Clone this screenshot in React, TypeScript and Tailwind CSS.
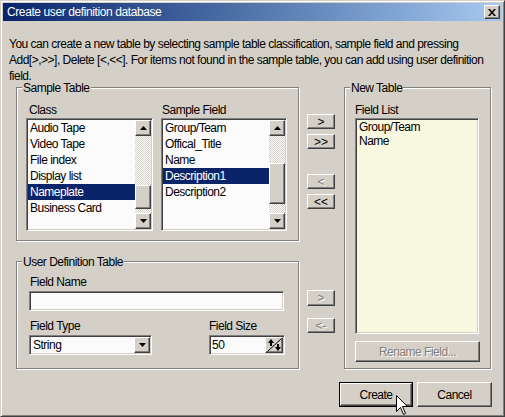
import React from 'react'

const raised =
  'bg-[#d4d0c8] border border-t-white border-l-white border-b-[#404040] border-r-[#404040] shadow-[inset_-1px_-1px_0_#808080]'
const sunken =
  'border border-t-[#808080] border-l-[#808080] border-b-white border-r-white shadow-[inset_1px_1px_0_#404040,inset_-1px_-1px_0_#d4d0c8] p-px'
const disabledText = 'text-[#808080] [text-shadow:1px_1px_0_#ffffff]'

function Group({ title, className, children }: { title: string; className: string; children: React.ReactNode }) {
  return (
    <div className={`relative border border-[#808080] shadow-[inset_1px_1px_0_#fff,1px_1px_0_#fff] ${className}`}>
      <span className="absolute left-[5px] top-[-8px] bg-[#d4d0c8] px-px leading-[16px]">{title}</span>
      {children}
    </div>
  )
}

function Arrow({ down }: { down?: boolean }) {
  return (
    <svg width="7" height="4" viewBox="0 0 7 4">
      {down ? <path d="M0 0h7L3.5 4z" fill="#000" /> : <path d="M0 4h7L3.5 0z" fill="#000" />}
    </svg>
  )
}

function ScrollBtn({ down }: { down?: boolean }) {
  return (
    <div className={`${raised} h-[16px] w-[16px] flex items-center justify-center`}>
      <Arrow down={down} />
    </div>
  )
}

function Listbox({
  items,
  selected,
  width,
  before,
  thumb,
}: {
  items: string[]
  selected: number
  width: string
  before: string
  thumb: string
}) {
  return (
    <div className={`${sunken} ${width} h-[113px] bg-[#fbfbfb] flex`}>
      <div className="flex-1 min-w-0">
        {items.map((item, i) => (
          <div
            key={item}
            className={`h-[16px] leading-[16px] pl-[2px] whitespace-nowrap ${
              i === selected ? 'bg-[#0a246a] text-white' : 'text-black'
            }`}
          >
            {item}
          </div>
        ))}
      </div>
      <div className="w-[16px] flex flex-col">
        <ScrollBtn />
        <div className="flex-1 flex flex-col bg-[repeating-conic-gradient(#d4d0c8_0%_25%,#ffffff_0%_50%)] bg-[length:2px_2px]">
          <div className={before} />
          <div className={`${raised} ${thumb}`} />
        </div>
        <ScrollBtn down />
      </div>
    </div>
  )
}

function SmallBtn({ label, disabled, className = '' }: { label: string; disabled?: boolean; className?: string }) {
  return (
    <div
      className={`${raised} w-[28px] flex items-center justify-center text-[12px] leading-none tracking-normal ${
        disabled ? disabledText : 'text-black'
      } ${className}`}
    >
      {label}
    </div>
  )
}

function SpinIcon() {
  return (
    <svg width="15" height="14" viewBox="0 0 15 14">
      <path d="M0.5 13.5L14.5 0.5" stroke="#000" strokeWidth="1" />
      <path d="M1 5h6L4 1z" fill="#000" />
      <rect x="3" y="5" width="2" height="3" fill="#000" />
      <rect x="10" y="6" width="2" height="3" fill="#000" />
      <path d="M8 9h6l-3 4z" fill="#000" />
    </svg>
  )
}

function Cursor() {
  return (
    <svg className="absolute left-[395px] top-[394px]" width="13" height="21" viewBox="0 0 13 21">
      <path d="M0.5 0.5V16.5L4.5 12.5L7.5 19.5L9.5 18.5L6.5 11.5H11.5Z" fill="#fff" stroke="#000" strokeWidth="1" />
    </svg>
  )
}

export default function App() {
  return (
    <div className="relative w-[505px] h-[417px] bg-[#d4d0c8] border border-t-[#d4d0c8] border-l-[#d4d0c8] border-b-[#404040] border-r-[#404040] shadow-[inset_1px_1px_0_#fff,inset_-1px_-1px_0_#808080] p-[2px] flex flex-col text-[12px] tracking-[-0.5px] text-black font-['Liberation_Sans',Arial,sans-serif] overflow-hidden">
      {/* title bar */}
      <div className="h-[18px] bg-gradient-to-r from-[#0a246a] to-[#a6caf0] flex items-center pl-[4px] pr-[2px]">
        <span className="flex-1 text-white text-[12px] tracking-[-0.4px] leading-[18px] whitespace-nowrap">
          Create user definition database
        </span>
        <div className={`${raised} w-[16px] h-[14px] flex items-center justify-center`}>
          <svg width="8" height="7" viewBox="0 0 8 7">
            <path d="M0 0h2l2 2.5L6 0h2L5 3.5 8 7H6L4 4.5 2 7H0l3-3.5z" fill="#000" />
          </svg>
        </div>
      </div>

      {/* description */}
      <div className="pl-[6px] pt-[15px] leading-[16px] whitespace-nowrap tracking-[-0.5px]">
        <div>You can create a new table by selecting sample table classification, sample field and pressing</div>
        <div>{'Add[>,>>], Delete [<,<<]. For items not found in the sample table, you can add using user definition'}</div>
        <div>field.</div>
      </div>

      {/* main */}
      <div className="flex items-start ml-[13px] mt-[3px]">
        <div className="w-[283px] flex flex-col">
          <Group title="Sample Table" className="h-[154px] pl-[9px] pt-[14px]">
            <div className="flex gap-[8px]">
              <div>
                <div className="h-[16px] leading-[16px] pl-[3px]">Class</div>
                <Listbox
                  items={['Audio Tape', 'Video Tape', 'File index', 'Display list', 'Nameplate', 'Business Card']}
                  selected={4}
                  width="w-[127px]"
                  before="h-[49px]"
                  thumb="h-[24px]"
                />
              </div>
              <div>
                <div className="h-[16px] leading-[16px] pl-px">Sample Field</div>
                <Listbox
                  items={['Group/Team', 'Offical_Title', 'Name', 'Description1', 'Description2']}
                  selected={3}
                  width="w-[126px]"
                  before="h-[27px]"
                  thumb="h-[41px]"
                />
              </div>
            </div>
          </Group>

          <Group title="User Definition Table" className="mt-[20px] h-[108px] pl-[12px] pt-[12px]">
            <div className="h-[17px] leading-[16px] pl-px">Field Name</div>
            <div className={`${sunken} w-[255px] h-[20px] bg-[#fbfbfb]`} />
            <div className="flex mt-[7px]">
              <div className="w-[180px]">
                <div className="h-[17px] leading-[16px] pl-px">Field Type</div>
                <div className={`${sunken} w-[123px] h-[20px] bg-[#fbfbfb] flex`}>
                  <span className="flex-1 leading-[16px] pl-[2px]">String</span>
                  <div className={`${raised} w-[16px] h-[16px] flex items-center justify-center`}>
                    <Arrow down />
                  </div>
                </div>
              </div>
              <div>
                <div className="h-[17px] leading-[16px]">Field Size</div>
                <div className={`${sunken} w-[76px] h-[20px] bg-[#fbfbfb] flex`}>
                  <span className="flex-1 leading-[16px] pl-px">50</span>
                  <div className={`${raised} w-[18px] h-[16px] flex items-center justify-center`}>
                    <SpinIcon />
                  </div>
                </div>
              </div>
            </div>
          </Group>
        </div>

        {/* middle buttons */}
        <div className="ml-[8px] w-[28px] flex flex-col pt-[27px]">
          <SmallBtn label=">" className="h-[15px]" />
          <SmallBtn label=">>" className="h-[15px] mt-[5px]" />
          <SmallBtn label="<" disabled className="h-[15px] mt-[25px]" />
          <SmallBtn label="<<" className="h-[15px] mt-[5px]" />
          <SmallBtn label=">" disabled className="h-[16px] mt-[81px]" />
          <SmallBtn label="<-" disabled className="h-[15px] mt-[12px]" />
        </div>

        <Group title="New Table" className="ml-[9px] w-[147px] h-[282px] pl-[10px] pt-[14px]">
          <div className="h-[16px] leading-[16px]">Field List</div>
          <div className={`${sunken} w-[124px] h-[216px] bg-[#f8f7e0]`}>
            <div className="leading-[14px] pl-[2px]">Group/Team</div>
            <div className="leading-[14px] pl-[2px]">Name</div>
          </div>
          <div className={`${raised} mt-[7px] w-[125px] h-[21px] flex items-center justify-center ${disabledText}`}>
            Rename Field...
          </div>
        </Group>
      </div>

      {/* bottom buttons */}
      <div className="flex justify-end gap-[4px] pr-[10px] mt-[13px]">
        <div className="w-[74px] h-[25px] border border-black">
          <div className={`${raised} h-full flex items-center justify-center`}>Create</div>
        </div>
        <div className={`${raised} w-[75px] h-[25px] flex items-center justify-center`}>Cancel</div>
      </div>

      <Cursor />
    </div>
  )
}
